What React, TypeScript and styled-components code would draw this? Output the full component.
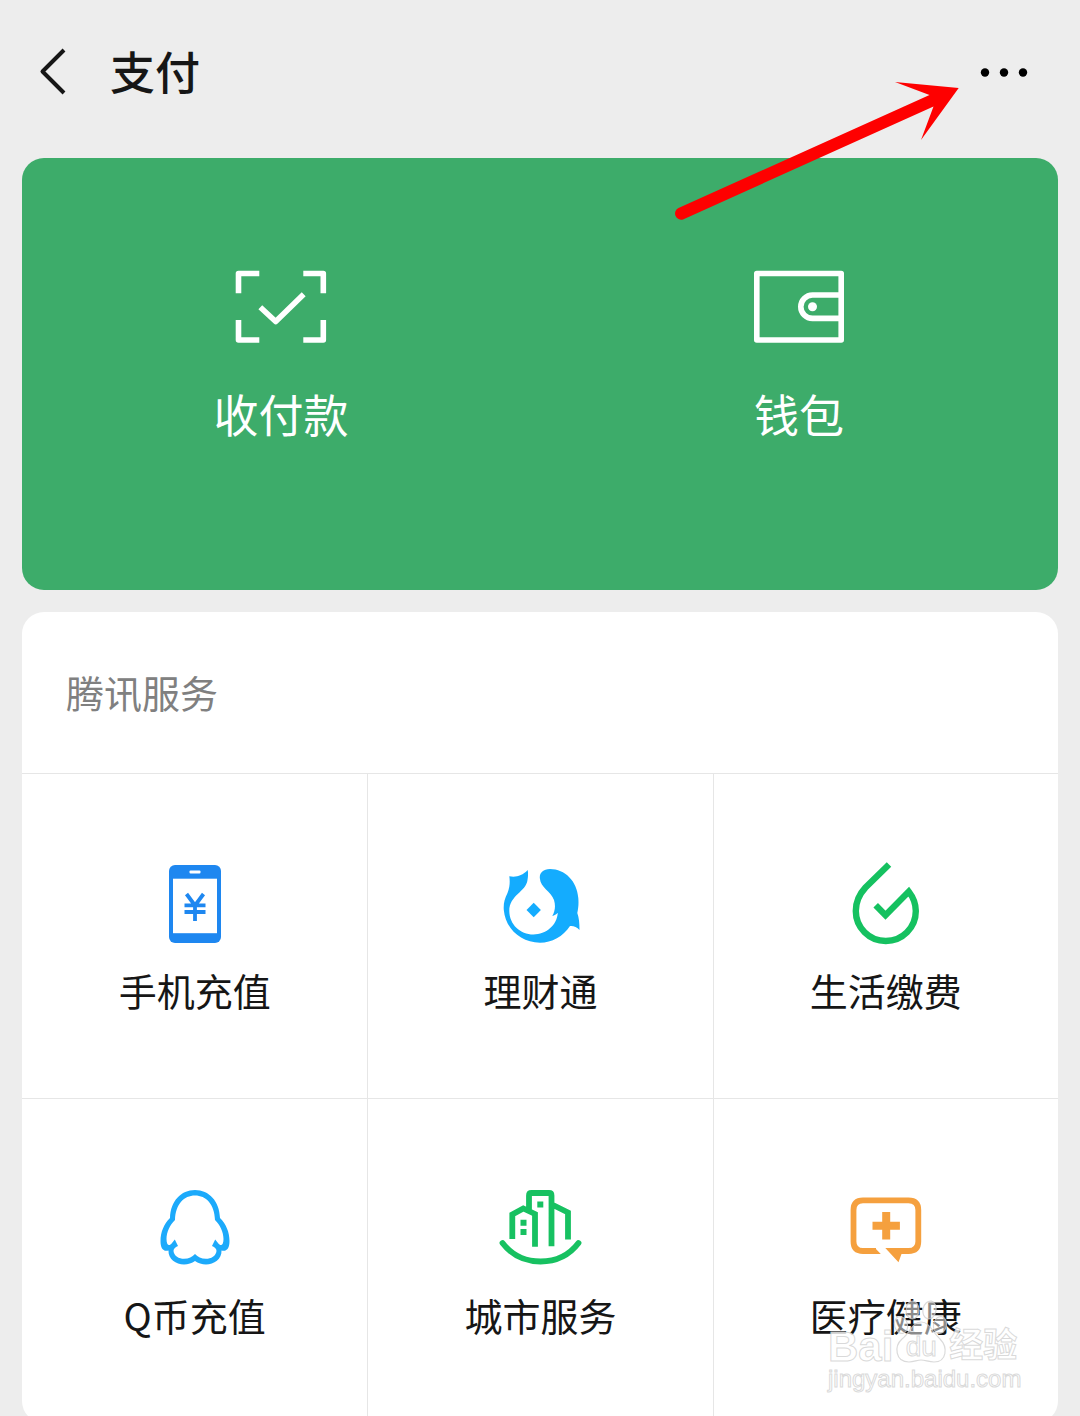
import React from "react";
import styled, { createGlobalStyle } from "styled-components";

const GlobalStyle = createGlobalStyle`
  *, *::before, *::after { box-sizing: border-box; }
  body {
    margin: 0;
    background: #ededed;
    color: #161616;
    font-family: "Noto Sans CJK SC", "Noto Sans", sans-serif;
  }
  svg { display: block; }
`;

const Page = styled.main`
  position: relative;
  height: 100vh;
  padding: 0 22px;
  overflow-x: hidden;
  overflow-y: auto;
  scrollbar-width: none;
  background: #ededed;
`;

const Header = styled.header`
  display: flex;
  align-items: center;
  gap: 38px;
  height: 146px;
  margin-bottom: 12px;
  padding: 0 26px 0 14px;
`;

const IconButton = styled.button`
  padding: 0;
  border: 0;
  background: none;
  color: inherit;
  cursor: pointer;
`;

const PageTitle = styled.h1`
  flex: 1;
  margin: 0;
  padding-bottom: 4px;
  font-size: 45px;
  font-weight: 500;
  line-height: 56px;
`;

const WalletCard = styled.section`
  display: grid;
  grid-template-columns: repeat(2, 1fr);
  min-height: 432px;
  border-radius: 22px;
  background: #3dac6a;
`;

const WalletAction = styled.button`
  display: flex;
  flex-direction: column;
  align-items: center;
  gap: 39px;
  padding: 109px 0 0;
  border: 0;
  background: none;
  color: #fff;
  font-family: inherit;
  font-size: 45px;
  line-height: 56px;
  cursor: pointer;
`;

const ServiceCard = styled.section`
  margin-top: 22px;
  border-radius: 22px;
  background: #fff;
  overflow: hidden;
`;

const ServiceTitle = styled.h2`
  margin: 0;
  padding: 58px 44px 59px;
  color: #808080;
  font-size: 38px;
  font-weight: 400;
  line-height: 44px;
`;

const ServiceGrid = styled.div`
  display: grid;
  grid-template-columns: repeat(3, 1fr);
`;

const ServiceItem = styled.a`
  display: flex;
  flex-direction: column;
  align-items: center;
  gap: 16px;
  height: 325px;
  padding-top: 82px;
  border-top: 1px solid #e6e6e6;
  color: inherit;
  font-size: 38px;
  line-height: 44px;
  text-decoration: none;

  &:not(:nth-child(3n + 1)) {
    border-left: 1px solid #e6e6e6;
  }
`;

const Arrow = styled.svg`
  position: absolute;
  top: 76px;
  right: 116px;
  pointer-events: none;
`;

const Watermark = styled.div`
  position: absolute;
  top: 1300px;
  right: 58px;
  width: 194px;
  color: rgba(255, 255, 255, 0.8);
  font-family: "Liberation Sans", "Noto Sans CJK SC", sans-serif;
  pointer-events: none;
  -webkit-text-stroke: 1px rgba(205, 205, 205, 0.75);
`;

const WatermarkBrand = styled.div`
  display: flex;
  align-items: flex-end;
  height: 66px;
  font-size: 42px;
  font-weight: 700;
  line-height: 38px;
`;

const PawBadge = styled.span`
  position: relative;
  width: 56px;
  height: 66px;
`;

const PawText = styled.span`
  position: absolute;
  left: 0;
  right: 0;
  bottom: 5px;
  font-size: 28px;
  font-weight: 400;
  line-height: 28px;
  text-align: center;
`;

const WatermarkName = styled.span`
  font-size: 34px;
  line-height: 42px;
`;

const WatermarkUrl = styled.div`
  font-size: 24px;
  line-height: 26px;
`;

const BackIcon = () => (
  <svg width="36" height="52" viewBox="0 0 36 52" fill="none" stroke="#161616" strokeWidth="4">
    <path d="M28 3 6.500 24.500 28 46" strokeLinejoin="round" />
  </svg>
);

const MoreIcon = () => (
  <svg width="56" height="32" viewBox="0 0 56 32" fill="#000">
    <circle cx="9" cy="15.500" r="4.200" />
    <circle cx="28" cy="15.500" r="4.200" />
    <circle cx="47" cy="15.500" r="4.200" />
  </svg>
);

const ScanIcon = () => (
  <svg width="96" height="80" viewBox="0 0 96 80" fill="none" stroke="#fff" strokeWidth="5.600" strokeLinejoin="round">
    <path d="M26.300 6.500H5.500V26.300M70.300 6.500H90.300V26.300M5.500 53V73H26.300M90.300 53V73H70.300" />
    <path d="M27.300 40.300 42.700 54.500 70.700 27.200" />
  </svg>
);

const WalletIcon = () => (
  <svg width="96" height="80" viewBox="0 0 96 80" fill="none" stroke="#fff" strokeWidth="5.600" strokeLinejoin="round">
    <rect x="5.800" y="6.500" width="84.400" height="66.500" />
    <path d="M90 28H61.500a11.700 11.700 0 0 0 0 23.400H90" />
    <circle cx="61.500" cy="39.700" r="4.500" fill="#fff" stroke="none" />
  </svg>
);

const PhoneIcon = () => (
  <svg width="96" height="96" viewBox="0 0 96 96">
    <rect x="22" y="9" width="52" height="78" rx="6" fill="#1e87f0" />
    <rect x="26" y="22.700" width="44" height="54.500" fill="#fff" />
    <rect x="42.500" y="14.500" width="11" height="3" rx="1" fill="#fff" />
    <path d="M39.500 38 48 49.500 56.500 38M37.500 49.300H58.500M37.500 56H58.500M48 49V65" fill="none" stroke="#1e87f0" strokeWidth="3.800" />
  </svg>
);

const FishIcon = () => (
  <svg width="96" height="96" viewBox="0 0 96 96" fill="#14acfe">
    <path d="M35.700 14C30 20 24 21.500 17.300 20.300C18 25 18 31 15.500 37C12.500 43 11.300 48 11.800 54C13.500 73 29 86.700 48 86.700C60 86.700 71 80.500 78 70C81 69.500 85 71 87.500 74C87.500 67 87 62 85.300 57C86.300 52 86.800 48 86.300 42C85 25 73 13 58 13C51 13 47.500 17 47.800 22C48.500 32 59 35 62 44C63.800 50 63 55 60.300 60C62.500 59.500 64 58.500 65.800 56.800C65 69.500 54 78.500 41.500 78.500C28 78.500 17.500 68.500 17.300 55C17.300 39 34 36 35.500 24C36.200 20 36.200 17 35.700 14Z" />
    <path d="M41.700 46.800 48.900 54 41.700 61.200 34.500 54Z" />
  </svg>
);

const DropIcon = () => (
  <svg width="96" height="96" viewBox="0 0 96 96" fill="none" stroke="#15c160" strokeWidth="6.400">
    <path d="M51 8.500 27.500 31.500C21 38.500 17.800 46 17.800 55A30 30 0 0 0 77.800 55C77.800 48 75 41 70.800 35.600L47.500 59.300 37.700 49.300" />
  </svg>
);

const PenguinIcon = () => (
  <svg width="96" height="96" viewBox="0 0 96 96" fill="#1caafb" fillRule="evenodd">
    <path d="M48 9C34 9 23.500 20 23 37C17 43 13.500 51 13.500 60C13.500 67 16 71 21.500 69.500C21 78 29 83.500 37 83.500C41 83.500 45 82 48 80C51 82 55 83.500 59 83.500C67 83.500 75 78 74.500 69.500C80 71 82.500 67 82.500 60C82.500 51 79 43 73 37C72.500 20 62 9 48 9ZM48 14.500C59 14.500 67.500 23 68 39C73 44 76.500 51 76.500 58C76.500 64 74 66 71 62L68.200 58.500L65 65C68 66 69.500 68 69.500 70C69 75 64 77.800 59 77.800C54 77.800 51 76 48 73C45 76 42 77.800 37 77.800C32 77.800 27 75 26.500 70C26.500 68 28 66 31 65L27.800 58.500L25 62C22 66 19.500 64 19.500 58C19.500 51 23 44 28 39C28.500 23 37 14.500 48 14.500Z" />
  </svg>
);

const CityIcon = () => (
  <svg width="96" height="96" viewBox="0 0 96 96" fill="none" stroke="#17c161" strokeWidth="5.800">
    <path d="M10.500 62C20 74.500 33 80.500 48.500 80.500S77 74.500 86.500 62" strokeLinecap="round" />
    <path d="M20.300 58V33.500L31.300 27.500 43 33V65.800M37 29V14.500Q37 12 39.500 12H57Q59.500 12 59.500 14.500V65.300M60 23.500 76 31.500V58.500" />
    <path d="M28.500 38.700h6v6h-6zM28.500 48h6v6h-6zM45.300 20.500h6v6h-6z" fill="#17c161" stroke="none" />
  </svg>
);

const MedicalIcon = () => (
  <svg width="96" height="96" viewBox="0 0 96 96" fill="#f5a03e">
    <path d="M38 70H25Q15.500 70 15.500 60.500V29Q15.500 19.300 25 19.300H70.500Q80.300 19.300 80.300 29V60.500Q80.300 70 70.500 70H60" fill="none" stroke="#f5a03e" strokeWidth="5.800" />
    <path d="M37 67.100 42.800 72.900H37ZM47.300 67.100H66V72.900H63.500L60.500 81.300Z" />
    <path d="M44.200 31h8v9.700h9.700v8h-9.700v9.700h-8v-9.700h-9.700v-8h9.700z" />
  </svg>
);

const PawIcon = () => (
  <svg width="56" height="66" viewBox="0 0 56 66" fill="rgba(255,255,255,.5)" stroke="rgba(205,205,205,.75)" strokeWidth="1.200">
    <ellipse cx="19.500" cy="10" rx="6.500" ry="9" />
    <ellipse cx="36.500" cy="10" rx="6.500" ry="9" transform="rotate(12 36.500 10)" />
    <ellipse cx="8" cy="25" rx="6.500" ry="8.500" transform="rotate(-15 8 25)" />
    <ellipse cx="47" cy="25" rx="6.500" ry="8.500" transform="rotate(12 47 25)" />
    <path d="M28 22C19 22 17 33 9 39C1 46 2 62 16 62C21 62 24 60 28 60S36 62 41 62C54 62 55 47 47 39C39 32 37 22 28 22Z" />
  </svg>
);

const services = [
  { label: "手机充值", Icon: PhoneIcon },
  { label: "理财通", Icon: FishIcon },
  { label: "生活缴费", Icon: DropIcon },
  { label: "Q币充值", Icon: PenguinIcon },
  { label: "城市服务", Icon: CityIcon },
  { label: "医疗健康", Icon: MedicalIcon },
];

export default function App() {
  return (
    <>
      <GlobalStyle />
      <Page>
        <Header>
          <IconButton type="button" aria-label="返回">
            <BackIcon />
          </IconButton>
          <PageTitle>支付</PageTitle>
          <IconButton type="button" aria-label="更多">
            <MoreIcon />
          </IconButton>
        </Header>

        <WalletCard>
          <WalletAction type="button">
            <ScanIcon />
            收付款
          </WalletAction>
          <WalletAction type="button">
            <WalletIcon />
            钱包
          </WalletAction>
        </WalletCard>

        <ServiceCard>
          <ServiceTitle>腾讯服务</ServiceTitle>
          <ServiceGrid>
            {services.map(({ label, Icon }) => (
              <ServiceItem key={label} href="#">
                <Icon />
                {label}
              </ServiceItem>
            ))}
          </ServiceGrid>
        </ServiceCard>

        <Arrow width="294" height="148" viewBox="0 0 294 148" fill="#fe0000" aria-hidden="true">
          <path d="M8.500 132 259.500 19 225 6 288.700 12 251 64 263.500 30.500 13 143.500A6.200 6.200 0 0 1 8.500 132Z" />
        </Arrow>

        <Watermark>
          <WatermarkBrand>
            <span>Bai</span>
            <PawBadge>
              <PawIcon />
              <PawText>du</PawText>
            </PawBadge>
            <WatermarkName>经验</WatermarkName>
          </WatermarkBrand>
          <WatermarkUrl>jingyan.baidu.com</WatermarkUrl>
        </Watermark>
      </Page>
    </>
  );
}
